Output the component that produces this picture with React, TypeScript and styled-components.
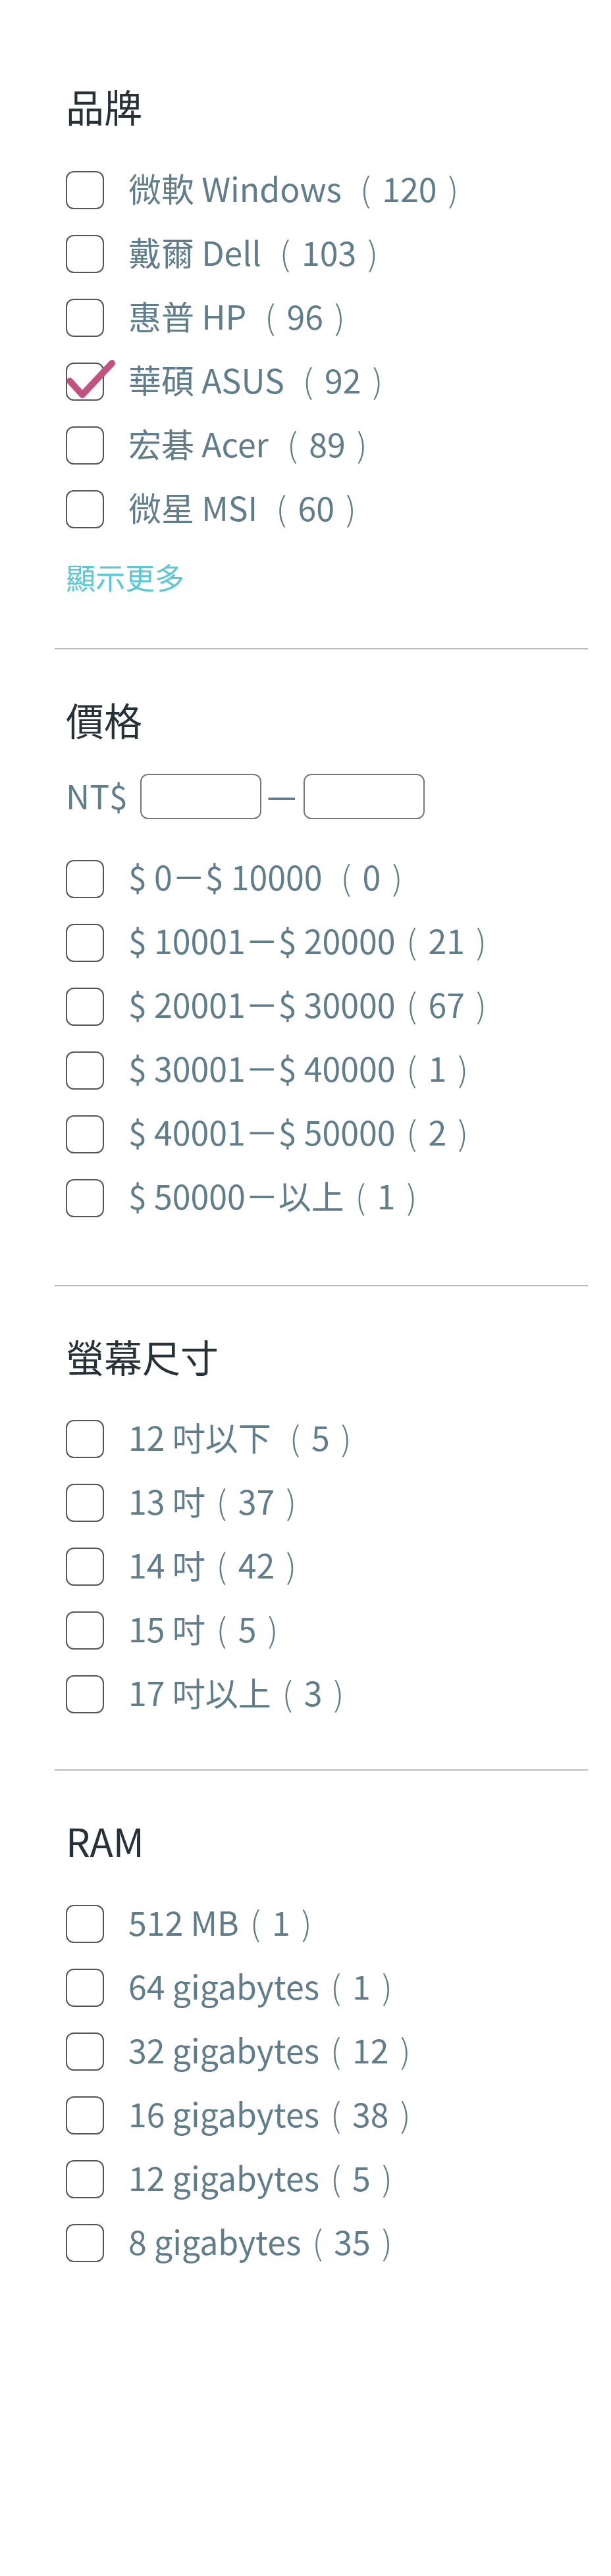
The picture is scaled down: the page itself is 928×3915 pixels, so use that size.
import * as React from 'react';
import styled, { createGlobalStyle } from 'styled-components';

const GlobalStyle = createGlobalStyle`
  body {
    margin: 0;
    background: #ffffff;
    font-family: 'Noto Sans CJK TC', 'Noto Sans', sans-serif;
  }
`;

const Page = styled.div`
  padding: 55px 35px 0 83px;
  min-height: 3860px;
`;

const Section = styled.section<{ $bottom: number; $last?: boolean }>`
  padding: 71px 17px ${(p) => p.$bottom}px;
  border-bottom: ${(p) => (p.$last ? 'none' : '2px solid #bdbdbd')};
`;

const Heading = styled.h2`
  margin: 0;
  font-size: 58px;
  line-height: 70px;
  font-weight: 400;
  color: #263238;
`;

const List = styled.div<{ $top: number }>`
  display: flex;
  flex-direction: column;
  margin-top: ${(p) => p.$top}px;
`;

const Row = styled.label`
  display: flex;
  align-items: center;
  height: 97px;
  cursor: pointer;
`;

const Box = styled.span`
  position: relative;
  flex: none;
  box-sizing: border-box;
  width: 58px;
  height: 58px;
  border: 2px solid #555;
  border-radius: 12px;
`;

const Tick = styled.svg`
  position: absolute;
  left: -4px;
  top: -10px;
  overflow: visible;
`;

const Text = styled.span`
  margin-left: 37px;
  padding-bottom: 9px;
  font-size: 50px;
  line-height: 1;
  color: #607d8b;
  white-space: pre;
`;

const Paren = styled.span`
  display: inline-block;
  width: 50px;
  text-align: center;
  font-size: 50px;
  font-weight: 200;
`;

const More = styled.div`
  margin-top: 24px;
  font-size: 45px;
  line-height: 60px;
  color: #5bc8d5;
  cursor: pointer;
`;

const RangeRow = styled.div`
  display: flex;
  align-items: center;
  margin-top: 49px;
  height: 68px;
`;

const Currency = styled.span`
  font-size: 50px;
  line-height: 1;
  padding-bottom: 6px;
  color: #607d8b;
  margin-right: 19px;
`;

const PriceInput = styled.input`
  box-sizing: border-box;
  width: 184px;
  height: 69px;
  border: 2px solid #777;
  border-radius: 12px;
  background: #fff;
  outline: none;
`;

const Dash = styled.span`
  width: 62px;
  padding-right: 2px;
  text-align: center;
  font-size: 56px;
  line-height: 1;
  color: #607d8b;
`;

type Item = { name: string; count: number; spaced?: boolean; checked?: boolean };

const Check = ({ item }: { item: Item }) => (
  <Row>
    <Box>
      {item.checked && (
        <Tick width="80" height="66" viewBox="0 0 80 66">
          <polyline
            points="8,36 27,57 72,9"
            fill="none"
            stroke="#c2527f"
            strokeWidth="10"
            strokeLinecap="round"
            strokeLinejoin="round"
          />
        </Tick>
      )}
    </Box>
    <Text>
      {item.name}
      {item.spaced ? ' ' : ''}
      <Paren>(</Paren>
      {item.count}
      <Paren>)</Paren>
    </Text>
  </Row>
);

const brands: Item[] = [
  { name: '微軟 Windows', count: 120, spaced: true },
  { name: '戴爾 Dell', count: 103, spaced: true },
  { name: '惠普 HP', count: 96, spaced: true },
  { name: '華碩 ASUS', count: 92, spaced: true, checked: true },
  { name: '宏碁 Acer', count: 89, spaced: true },
  { name: '微星 MSI', count: 60, spaced: true },
];

const prices: Item[] = [
  { name: '$ 0－$ 10000', count: 0, spaced: true },
  { name: '$ 10001－$ 20000', count: 21 },
  { name: '$ 20001－$ 30000', count: 67 },
  { name: '$ 30001－$ 40000', count: 1 },
  { name: '$ 40001－$ 50000', count: 2 },
  { name: '$ 50000－以上', count: 1 },
];

const screens: Item[] = [
  { name: '12 吋以下', count: 5, spaced: true },
  { name: '13 吋', count: 37 },
  { name: '14 吋', count: 42 },
  { name: '15 吋', count: 5 },
  { name: '17 吋以上', count: 3 },
];

const rams: Item[] = [
  { name: '512 MB', count: 1 },
  { name: '64 gigabytes', count: 1 },
  { name: '32 gigabytes', count: 12 },
  { name: '16 gigabytes', count: 38 },
  { name: '12 gigabytes', count: 5 },
  { name: '8 gigabytes', count: 35 },
];

export default function App() {
  return (
    <Page>
      <GlobalStyle />
      <Section $bottom={78}>
        <Heading>品牌</Heading>
        <List $top={44.5}>
          {brands.map((b) => (
            <Check key={b.name} item={b} />
          ))}
        </List>
        <More>顯示更多</More>
      </Section>

      <Section $bottom={83.5}>
        <Heading>價格</Heading>
        <RangeRow>
          <Currency>NT$</Currency>
          <PriceInput />
          <Dash>－</Dash>
          <PriceInput />
        </RangeRow>
        <List $top={42.5}>
          {prices.map((p) => (
            <Check key={p.name} item={p} />
          ))}
        </List>
      </Section>

      <Section $bottom={65.5}>
        <Heading>螢幕尺寸</Heading>
        <List $top={43}>
          {screens.map((s) => (
            <Check key={s.name} item={s} />
          ))}
        </List>
      </Section>

      <Section $bottom={0} $last>
        <Heading>RAM</Heading>
        <List $top={43.5}>
          {rams.map((r) => (
            <Check key={r.name} item={r} />
          ))}
        </List>
      </Section>
    </Page>
  );
}
